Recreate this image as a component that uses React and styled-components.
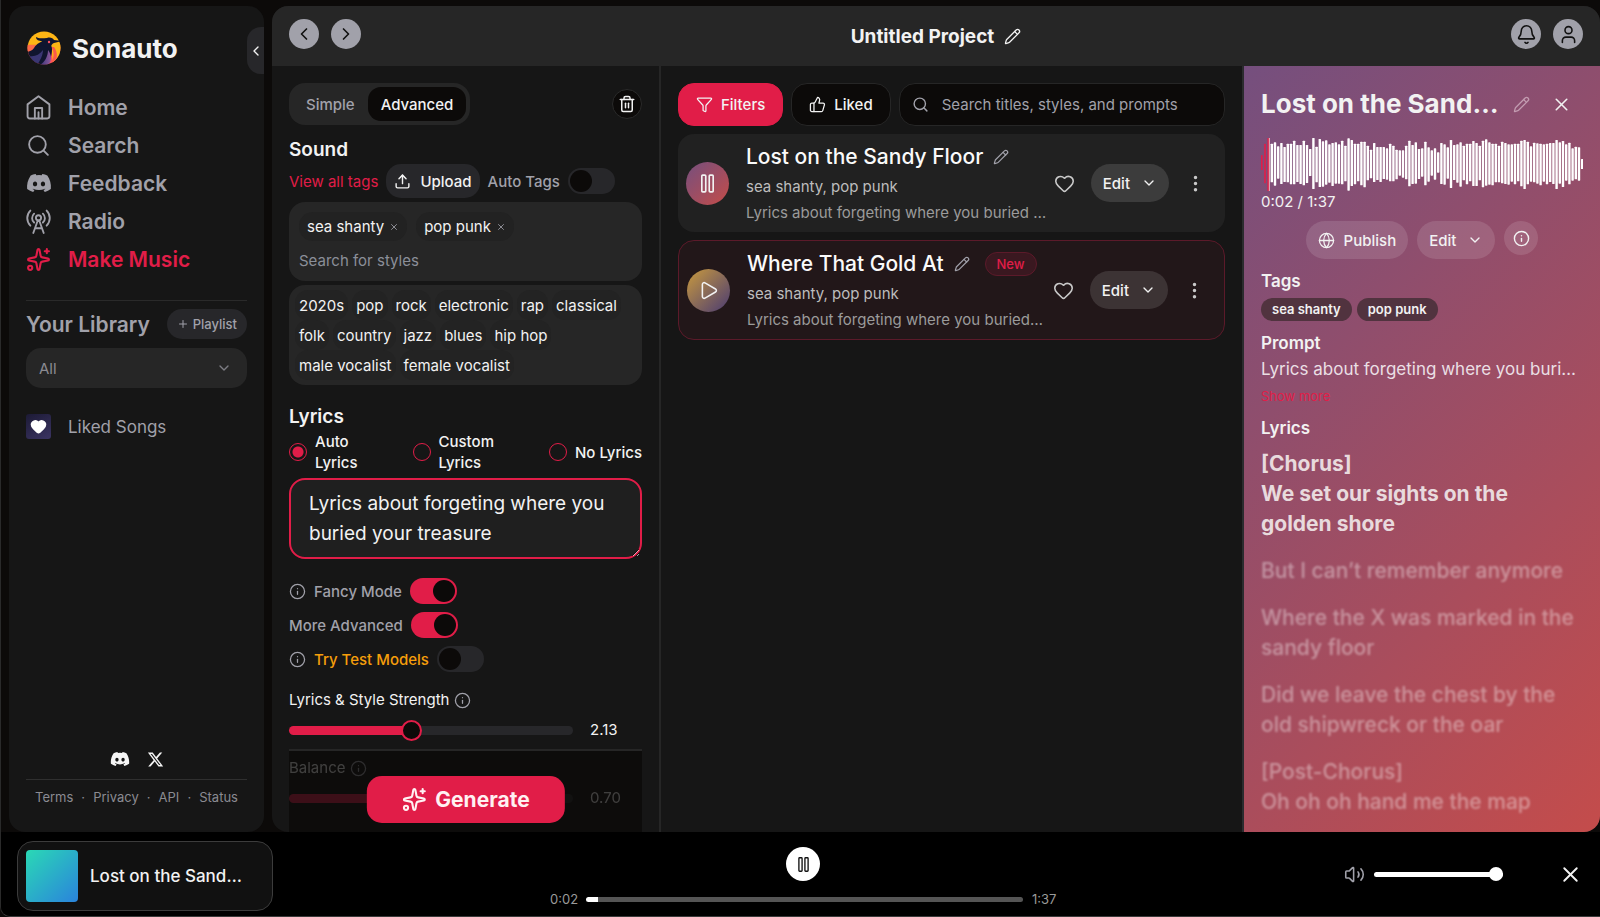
import React, { useState } from 'react';
import styled, { createGlobalStyle, css } from 'styled-components';
import {
  Bell,
  ChevronDown,
  ChevronLeft,
  ChevronRight,
  EllipsisVertical,
  Funnel,
  Globe,
  Heart,
  Info,
  Pencil,
  Play,
  Plus,
  Search,
  Sparkles,
  ThumbsUp,
  Trash2,
  Upload,
  User,
  Volume2,
  X,
} from 'lucide-react';
import { FaDiscord, FaXTwitter } from 'react-icons/fa6';

const rose = '#e11d48';
const muted = '#a1a1aa';
const surface = '#161616';
const raised = '#262626';
const ink = '#0c0a09';

const GlobalStyle = createGlobalStyle`
  * { box-sizing: border-box; }
  body {
    margin: 0;
    background: ${ink};
    color: #f2f2f2;
    color-scheme: dark;
    font-family: Inter, "Liberation Sans", sans-serif;
    font-size: 15px;
  }
  button, input, textarea, select { font: inherit; color: inherit; }
  button { border: 0; padding: 0; background: none; cursor: pointer; }
  a { color: inherit; text-decoration: none; }
  h1, h2, h3, p, ul { margin: 0; padding: 0; }
  svg { flex: none; display: block; }
`;

const Page = styled.div`
  display: flex;
  flex-direction: column;
  height: 100vh;
  border-left: 1px solid #2a2a2a;
  border-bottom: 1px solid #3a3a3a;
  border-bottom-left-radius: 10px;
  overflow: hidden;
`;

const Workspace = styled.div`
  display: flex;
  flex: 1;
  min-height: 0;
  gap: 8px;
  padding: 6px 0 0 8px;
`;

/* ---------- sidebar ---------- */

const Sidebar = styled.aside`
  position: relative;
  display: flex;
  flex-direction: column;
  flex: 0 0 255px;
  padding: 25px 17px 26px;
  border-radius: 16px;
  background: ${surface};
`;

const Brand = styled.a`
  display: flex;
  align-items: center;
  gap: 10px;
  height: 34px;
  padding-left: 1px;
  font-size: 26px;
  font-weight: 700;
`;

const CollapseButton = styled.button`
  position: absolute;
  top: 21px;
  right: 0;
  display: flex;
  align-items: center;
  justify-content: center;
  width: 17px;
  height: 47px;
  border-radius: 14px 0 0 14px;
  background: #27272a;
`;

const NavList = styled.nav`
  display: flex;
  flex-direction: column;
  margin-top: 23px;
  padding-bottom: 22px;
  border-bottom: 1px solid #2a2a2a;
`;

const NavLink = styled.a`
  display: flex;
  align-items: center;
  gap: 17px;
  height: 38px;
  font-size: 21px;
  font-weight: 600;
  color: ${({ $active }) => ($active ? rose : muted)};
`;

const IconSlot = styled.span`
  display: flex;
  justify-content: center;
  width: 25px;
`;

const LibraryHead = styled.div`
  display: flex;
  align-items: center;
  justify-content: space-between;
  margin-top: 8px;
`;

const LibraryTitle = styled.h2`
  font-size: 21px;
  font-weight: 600;
  color: ${muted};
`;

const PlaylistButton = styled.button`
  display: flex;
  align-items: center;
  gap: 4px;
  height: 30px;
  padding: 0 10px;
  border-radius: 15px;
  background: #27272a;
  color: ${muted};
  font-size: 13px;
  font-weight: 500;
`;

const SelectWrap = styled.div`
  position: relative;
  margin-top: 9px;
  color: #7d7d84;
  svg {
    position: absolute;
    right: 15px;
    top: 12px;
    pointer-events: none;
  }
`;

const LibrarySelect = styled.select`
  width: 100%;
  height: 40px;
  padding: 0 13px;
  border: 0;
  border-radius: 15px;
  appearance: none;
  background: ${raised};
  color: #8b8b92;
`;

const LikedSongs = styled.a`
  display: flex;
  align-items: center;
  gap: 17px;
  margin-top: 26px;
  font-size: 17px;
  color: ${muted};
`;

const HeartTile = styled.span`
  display: flex;
  align-items: center;
  justify-content: center;
  width: 25px;
  height: 25px;
  border-radius: 3px;
  background: linear-gradient(150deg, #1c1a35, #3b3463);
  color: #fff;
`;

const Socials = styled.div`
  display: flex;
  align-items: center;
  justify-content: center;
  gap: 17px;
  margin-top: auto;
  padding-bottom: 10px;
  border-bottom: 1px solid #2f2f2f;
  color: #f5f5f5;
`;

const FooterLinks = styled.div`
  display: flex;
  justify-content: space-between;
  padding: 8px 9px 0;
  font-size: 13px;
  line-height: 18px;
  color: #8b8b92;
`;

/* ---------- main area ---------- */

const Main = styled.main`
  display: flex;
  flex-direction: column;
  flex: 1;
  min-width: 0;
  border-radius: 16px;
  background: ${surface};
  overflow: hidden;
`;

const TopBar = styled.header`
  display: grid;
  grid-template-columns: 1fr auto 1fr;
  align-items: center;
  flex: none;
  height: 60px;
  padding: 0 17px;
  background: ${raised};
`;

const TopGroup = styled.div`
  display: flex;
  gap: 12px;
  padding-bottom: 4px;
  justify-content: ${({ $end }) => ($end ? 'flex-end' : 'flex-start')};
`;

const RoundButton = styled.button`
  display: flex;
  align-items: center;
  justify-content: center;
  width: 30px;
  height: 30px;
  border-radius: 50%;
  background: ${muted};
  color: #111;
`;

const ProjectTitle = styled.h1`
  display: flex;
  align-items: center;
  gap: 10px;
  font-size: 19px;
  font-weight: 700;
`;

const Columns = styled.div`
  display: flex;
  flex: 1;
  min-height: 0;
`;

const Composer = styled.section`
  position: relative;
  display: flex;
  flex-direction: column;
  flex: 0 0 389px;
  padding: 17px 17px 0;
  border-right: 2px solid ${raised};
  overflow: hidden;
`;

const Row = styled.div`
  display: flex;
  align-items: center;
  gap: 8px;
`;

const ComposerTop = styled(Row)`
  justify-content: space-between;
`;

const Segmented = styled.div`
  display: flex;
  padding: 4px;
  border-radius: 16px;
  background: ${raised};
`;

const Segment = styled.button`
  height: 34px;
  padding: 0 13px;
  border-radius: 13px;
  font-weight: 500;
  color: ${muted};
  ${({ $active }) => $active && css`
    background: ${ink};
    color: #f2f2f2;
  `}
`;

const TrashButton = styled(RoundButton)`
  border: 1px solid #2a2a2a;
  background: ${ink};
  color: #f2f2f2;
`;

const SectionTitle = styled.h2`
  margin-top: ${({ $gap }) => $gap}px;
  font-size: 19px;
  line-height: 28px;
  font-weight: 600;
`;

const TagsLink = styled.a`
  color: ${rose};
`;

const UploadButton = styled.button`
  display: flex;
  align-items: center;
  gap: 9px;
  height: 34px;
  padding: 0 8px;
  border-radius: 15px;
  background: #27272a;
  font-weight: 500;
`;

const FieldLabel = styled.label`
  font-weight: 500;
  color: ${({ $warn }) => ($warn ? '#f59e0b' : muted)};
`;

const Switch = styled.input.attrs({ type: 'checkbox', role: 'switch' })`
  appearance: none;
  display: flex;
  align-items: center;
  width: 47px;
  height: 26px;
  margin: 0;
  padding: 2px;
  border-radius: 13px;
  background: #27272a;
  cursor: pointer;
  &::before {
    content: '';
    width: 22px;
    height: 22px;
    border-radius: 50%;
    background: ${ink};
  }
  &:checked {
    justify-content: flex-end;
    background: ${rose};
  }
`;

const TagBox = styled.div`
  margin-top: 4px;
  padding: 10px;
  border-radius: 16px;
  background: ${raised};
`;

const PickedTags = styled.div`
  display: flex;
  gap: 9px;
`;

const PickedTag = styled.span`
  display: flex;
  align-items: center;
  gap: 5px;
  height: 29px;
  padding: 0 8px;
  border-radius: 14px;
  background: #222;
`;

const RemoveTag = styled.button`
  display: flex;
  color: ${muted};
`;

const StyleInput = styled.input`
  display: block;
  width: 100%;
  margin-top: 9px;
  padding: 0;
  border: 0;
  outline: none;
  background: none;
  line-height: 21px;
  &::placeholder { color: #8b8f99; opacity: 1; }
`;

const Suggestions = styled.div`
  display: flex;
  flex-wrap: wrap;
  column-gap: 4px;
  margin-top: 4px;
  padding: 5px 5px 5px 6px;
  border-radius: 16px;
  background: ${raised};
`;

const Suggestion = styled.button`
  height: 30px;
  padding: 0 4px;
  border-radius: 13px;
  background: #232323;
`;

const RadioGroup = styled.div`
  display: grid;
  grid-template-columns: 124fr 137fr auto;
`;

const RadioLabel = styled.label`
  display: flex;
  align-items: center;
  gap: 8px;
  font-weight: 500;
  line-height: 21px;
`;

const Radio = styled.input.attrs({ type: 'radio' })`
  appearance: none;
  flex: none;
  width: 18px;
  height: 18px;
  margin: 0;
  border: 1px solid ${rose};
  border-radius: 50%;
  &:checked {
    background: radial-gradient(circle, ${rose} 5px, transparent 6px);
  }
`;

const LyricsPrompt = styled.textarea`
  display: block;
  flex: none;
  width: 100%;
  height: 81px;
  margin-top: 5px;
  padding: 9px 18px 5px;
  border: 2px solid ${rose};
  border-radius: 16px;
  outline: none;
  background: #1f1f1f;
  font-size: 19px;
  line-height: 30px;
  overflow: hidden;
`;

const Toggles = styled.div`
  display: flex;
  flex-direction: column;
  gap: 8px;
  margin-top: 19px;
  svg { color: ${muted}; }
`;

const SliderBlock = styled.div`
  margin-top: ${({ $first }) => ($first ? '18px' : '7px')};
`;

const SliderLabel = styled.label`
  display: flex;
  align-items: center;
  gap: 5px;
  line-height: 20px;
  svg { color: ${muted}; }
`;

const SliderRow = styled.div`
  display: grid;
  grid-template-columns: 1fr 52px;
  align-items: center;
  gap: 17px;
  margin-top: 9px;
  line-height: 22px;
`;

const Slider = styled.input.attrs({ type: 'range' })`
  appearance: none;
  width: 100%;
  height: 9px;
  margin: 0;
  border-radius: 5px;
  outline: none;
  &::-webkit-slider-thumb {
    appearance: none;
    width: 21px;
    height: 21px;
    border: 2px solid ${rose};
    border-radius: 50%;
    background: ${ink};
  }
`;

const Dimmed = styled.div`
  flex: 1;
  margin-top: 8px;
  border-top: 2px solid ${raised};
  background: #0d0c0b;
  > div { opacity: 0.22; }
`;

const GenerateButton = styled.button`
  position: absolute;
  left: 50%;
  bottom: 9px;
  transform: translateX(-50%);
  display: flex;
  align-items: center;
  gap: 9px;
  height: 47px;
  padding: 0 35px;
  border-radius: 15px;
  background: ${rose};
  color: #fff1f2;
  font-size: 21px;
  font-weight: 700;
`;

/* ---------- track list ---------- */

const Tracks = styled.section`
  display: flex;
  flex-direction: column;
  flex: 1;
  min-width: 0;
  gap: 8px;
  padding: 17px;
`;

const FilterBar = styled.div`
  display: flex;
  gap: 8px;
  height: 43px;
`;

const FilterButton = styled.button`
  display: flex;
  align-items: center;
  gap: 8px;
  padding: 0 17px;
  border: 1px solid ${({ $primary }) => ($primary ? rose : raised)};
  border-radius: 16px;
  background: ${({ $primary }) => ($primary ? rose : ink)};
  font-weight: 500;
`;

const SearchBox = styled.label`
  display: flex;
  align-items: center;
  gap: 13px;
  flex: 1;
  min-width: 0;
  padding: 0 12px;
  border: 1px solid ${raised};
  border-radius: 16px;
  background: ${ink};
  color: ${muted};
`;

const SearchInput = styled.input`
  flex: 1;
  min-width: 0;
  padding: 0;
  border: 0;
  outline: none;
  background: none;
  &::placeholder { color: ${muted}; opacity: 1; }
`;

const TrackCard = styled.article`
  display: flex;
  align-items: center;
  padding: 6px 19px 6px 8px;
  border-radius: 16px;
  background: #212121;
  ${({ $fresh }) => $fresh && css`
    border: 1px solid #5c1a2a;
    background: #221719;
  `}
`;

const Cover = styled.button`
  display: flex;
  align-items: center;
  justify-content: center;
  flex: none;
  width: 43px;
  height: 43px;
  border-radius: 50%;
  background: ${({ $from, $to }) => `linear-gradient(135deg, ${$from}, ${$to})`};
`;

const TrackText = styled.div`
  flex: 1;
  min-width: 0;
  margin: 0 6px 0 17px;
`;

const TrackTitle = styled.h3`
  display: flex;
  align-items: center;
  gap: 10px;
  font-size: 21px;
  line-height: 34px;
  font-weight: 500;
  white-space: nowrap;
  color: #fafafa;
  svg { color: ${muted}; }
`;

const NewBadge = styled.span`
  margin-left: 5px;
  padding: 0 11px;
  border: 1px solid #5c1a2a;
  border-radius: 12px;
  background: #3a1820;
  color: ${rose};
  font-size: 13px;
  line-height: 22px;
`;

const TrackLine = styled.p`
  overflow: hidden;
  line-height: 26px;
  text-overflow: ellipsis;
  white-space: nowrap;
  color: ${({ $dim }) => ($dim ? '#9b9b9b' : '#bdbdbd')};
`;

const PlainIcon = styled.button`
  display: flex;
  color: ${({ $color }) => $color || '#f2f2f2'};
`;

const Pill = styled.button`
  display: flex;
  align-items: center;
  gap: 9px;
  height: 38px;
  padding: 0 12px;
  border-radius: 19px;
  background: rgba(255, 255, 255, 0.12);
  font-weight: 500;
`;

const EditPill = styled(Pill)`
  gap: 11px;
`;

const TrackActions = styled.div`
  display: flex;
  align-items: center;
  gap: 16px;
`;

/* ---------- detail panel ---------- */

const Detail = styled.section`
  flex: 0 0 358px;
  padding: 17px;
  border-left: 2px solid #2b2b2e;
  background: linear-gradient(135deg, #754f7e, #c44c4b);
  overflow: hidden;
`;

const DetailHead = styled.div`
  display: flex;
  align-items: center;
  gap: 21px;
  height: 42px;
  padding-right: 11px;
`;

const DetailTitle = styled.h2`
  flex: 1;
  min-width: 0;
  margin-right: -9px;
  overflow: hidden;
  font-size: 26px;
  line-height: 34px;
  font-weight: 700;
  text-overflow: ellipsis;
  white-space: nowrap;
`;

const WaveBox = styled.div`
  height: 54px;
  margin-top: 12px;
  svg { width: 100%; height: 54px; }
`;

const Time = styled.p`
  line-height: 22px;
`;

const DetailActions = styled.div`
  display: flex;
  align-items: flex-start;
  justify-content: center;
  gap: 9px;
  margin-top: 8px;
`;

const InfoButton = styled(Pill)`
  width: 34px;
  height: 34px;
  padding: 0;
  justify-content: center;
`;

const DetailLabel = styled.h3`
  margin-top: 9px;
  font-size: 17px;
  line-height: 26px;
  font-weight: 600;
`;

const DetailTags = styled.div`
  display: flex;
  gap: 5px;
  margin-top: 4px;
`;

const DetailTag = styled.span`
  padding: 0 11px;
  border-radius: 12px;
  background: #51333f;
  font-size: 13px;
  line-height: 23px;
  font-weight: 600;
`;

const PromptLine = styled.p`
  overflow: hidden;
  font-size: 17px;
  line-height: 26px;
  text-overflow: ellipsis;
  white-space: nowrap;
  color: #eadfe4;
`;

const ShowMore = styled.button`
  display: block;
  margin-top: 5px;
  color: ${rose};
  font-size: 13px;
  line-height: 19px;
`;

const Verse = styled.p`
  margin-top: ${({ $active }) => ($active ? '8px' : '17px')};
  font-size: 21px;
  line-height: 30px;
  font-weight: ${({ $active }) => ($active ? 700 : 500)};
  color: ${({ $active }) => ($active ? '#e8dadd' : 'rgba(255, 255, 255, 0.4)')};
  ${({ $active }) => !$active && css`filter: blur(1px);`}
`;

/* ---------- player ---------- */

const Player = styled.footer`
  display: grid;
  grid-template-columns: 1fr 506px 1fr;
  align-items: center;
  flex: none;
  height: 84px;
  padding: 0 11px 0 16px;
  background: #000;
`;

const NowPlaying = styled.div`
  display: flex;
  align-items: center;
  gap: 12px;
  width: 256px;
  height: 70px;
  margin-top: 3px;
  padding: 0 8px;
  border: 1px solid #3c3c3c;
  border-radius: 16px;
  background: #111;
`;

const Art = styled.div`
  flex: none;
  width: 52px;
  height: 52px;
  border-radius: 4px;
  background: linear-gradient(135deg, #2ad9b5, #2a83dc);
`;

const NowTitle = styled.span`
  width: 154px;
  overflow: hidden;
  font-size: 17px;
  line-height: 26px;
  font-weight: 500;
  text-overflow: ellipsis;
  white-space: nowrap;
`;

const Transport = styled.div`
  display: flex;
  flex-direction: column;
  align-items: center;
  gap: 8px;
  padding-top: 8px;
`;

const PauseButton = styled(RoundButton)`
  width: 34px;
  height: 34px;
  background: #fff;
`;

const ProgressRow = styled.div`
  display: grid;
  grid-template-columns: 27px 1fr 24px;
  align-items: center;
  gap: 9px;
  width: 100%;
  color: #9a9a9a;
  font-size: 13px;
  line-height: 20px;
`;

const Seek = styled(Slider)`
  height: 5px;
  &::-webkit-slider-thumb { width: 0; height: 0; border: 0; }
`;

const Volume = styled(Slider)`
  width: 129px;
  height: 5px;
  background: #fff;
  &::-webkit-slider-thumb {
    width: 14px;
    height: 14px;
    border: 0;
    background: #fff;
  }
`;

const PlayerEnd = styled.div`
  display: flex;
  align-items: center;
  justify-content: flex-end;
  gap: 9px;
  padding-right: 6px;
  color: ${muted};
  button { margin-left: 46px; }
`;

const Logo = () => (
  <svg width="35" height="34" viewBox="0 0 35 34">
    <defs>
      <linearGradient id="sky" x1="0" y1="0" x2="0" y2="1">
        <stop offset="0.38" stopColor="#fdb515" />
        <stop offset="0.42" stopColor="#fb8a24" />
        <stop offset="0.6" stopColor="#ff4f5e" />
      </linearGradient>
      <linearGradient id="plume" x1="0" y1="0" x2="1" y2="0">
        <stop offset="0" stopColor="#3c3679" />
        <stop offset="1" stopColor="#8a5a9c" />
      </linearGradient>
      <clipPath id="disc"><circle cx="17" cy="17" r="16.5" /></clipPath>
    </defs>
    <g clipPath="url(#disc)">
      <rect width="35" height="34" fill="url(#sky)" />
      <path d="M0 14h14v8H0z" fill="#fd6a4a" />
      <path d="M24 14 34 11v18l-8 5z" fill="#fdb515" />
      <path d="M24 16c4 5 3 12-1 18h3c5-5 5-13 1-18z" fill="#fb5a4c" />
      <path d="M0 21c3-1 5-1 7-4 3-5 7-6 10-7 5 1 8 4 8 8 0 6-2 12-6 16H5z" fill="#10152f" />
      <path d="M2 25c6 1 10-1 14-6 0 5-3 11-6 15H5z" fill="#3a3673" />
      <path d="M13 34c5-3 8-9 8-15 4 5 4 11 0 15z" fill="url(#plume)" />
    </g>
    <path d="M9 6c3 2 7 1 11 1 3-1 6 0 7 2l8 1-8 2c-3 1-4 5-3 9-4-6-9-8-14-5 2-2 4-4 5-6-3 0-6-1-6-4z" fill="#10152f" />
    <circle cx="22" cy="11" r="1.2" fill="#ff4f5e" />
  </svg>
);

const HomeIcon = () => (
  <svg width="25" height="25" viewBox="0 0 24 24" fill="none" stroke="currentColor" strokeWidth="1.8" strokeLinecap="round" strokeLinejoin="round">
    <path d="M1.5 9 12 1.2 22.5 9v11.5a2 2 0 0 1-2 2h-17a2 2 0 0 1-2-2z" />
    <path d="M8.5 22.5v-10h7v10M12 16.5v6" />
  </svg>
);

const RadioIcon = () => (
  <svg width="25" height="25" viewBox="0 0 24 24" fill="none" stroke="currentColor" strokeWidth="1.8" strokeLinecap="round" strokeLinejoin="round">
    <path d="M4.2 1.5c-4 4-4 10.5 0 14.5M19.8 1.5c4 4 4 10.5 0 14.5" />
    <path d="M7.8 4.5c-2.6 2.6-2.6 6 0 8.5M16.2 4.5c2.6 2.6 2.6 6 0 8.5" />
    <circle cx="12" cy="8.5" r="2.5" />
    <path d="m11.3 11-4.3 12M12.7 11 17 23M8.8 18.5h6.4" />
  </svg>
);

const PauseIcon = ({ size = 21 }) => (
  <svg width={size} height={size} viewBox="0 0 24 24" fill="none" stroke="currentColor" strokeWidth="1.9">
    <rect x="5.5" y="2.5" width="4.5" height="19" rx="1" />
    <rect x="14" y="2.5" width="4.5" height="19" rx="1" />
  </svg>
);

const levels = [
  27, 61, 78, 61, 65, 53, 63, 51, 61, 61, 70, 57, 57, 70, 57, 45, 78, 52, 75, 68, 71, 59, 63, 65, 59,
  70, 55, 77, 72, 61, 61, 67, 67, 55, 43, 63, 51, 51, 51, 47, 61, 55, 43, 41, 41, 55, 70, 57, 65, 45,
  47, 67, 50, 41, 47, 35, 63, 59, 50, 72, 57, 59, 65, 55, 61, 61, 69, 63, 55, 70, 74, 65, 61, 61, 55,
  67, 63, 59, 59, 61, 61, 70, 72, 67, 53, 64, 62, 61, 59, 61, 63, 63, 72, 65, 69, 59, 64, 47, 52, 50, 15,
];

const Waveform = () => (
  <svg viewBox="0 0 322 54" preserveAspectRatio="none" role="img" aria-label="Waveform">
    {levels.map((level, i) => {
      const top = level / 3;
      const bottom = Math.max(top + ((i * 7) % 5) - 3, 5);
      return (
        <rect
          key={i}
          x={i * 3.2}
          y={27 - top}
          width={i < 3 ? 1.6 : 2.4}
          height={top + bottom}
          rx="0.6"
          fill={i < 3 ? rose : '#fff'}
        />
      );
    })}
    <rect x="7.8" y="1" width="1.2" height="53" fill="#d9a6b5" />
  </svg>
);

const navItems = [
  { name: 'Home', icon: <HomeIcon /> },
  { name: 'Search', icon: <Search size={25} strokeWidth={1.8} /> },
  { name: 'Feedback', icon: <FaDiscord size={26} /> },
  { name: 'Radio', icon: <RadioIcon /> },
  { name: 'Make Music', icon: <Sparkles size={25} />, active: true },
];

const footerLinks = ['Terms', 'Privacy', 'API', 'Status'];

const suggestions = [
  '2020s', 'pop', 'rock', 'electronic', 'rap', 'classical', 'folk', 'country',
  'jazz', 'blues', 'hip hop', 'male vocalist', 'female vocalist',
];

const tracks = [
  { title: 'Lost on the Sandy Floor', from: '#754f7e', to: '#c44c49', playing: true },
  { title: 'Where That Gold At', from: '#c99a3e', to: '#4a3b72', fresh: true },
];

const verses = [
  ['But I can’t remember anymore'],
  ['Where the X was marked in the sandy floor'],
  ['Did we leave the chest by the old shipwreck or the oar'],
  ['[Post-Chorus]', 'Oh oh oh hand me the map'],
];

const SliderField = ({ id, label, value, onChange, min, max, first }) => {
  const percent = ((value - min) / (max - min)) * 100;
  return (
    <SliderBlock $first={first}>
      <SliderLabel htmlFor={id}>{label} <Info size={17} strokeWidth={1.8} /></SliderLabel>
      <SliderRow>
        <Slider
          id={id}
          min={min}
          max={max}
          step="0.01"
          value={value}
          onChange={(e) => onChange(Number(e.target.value))}
          style={{ background: `linear-gradient(to right, ${rose} ${percent}%, #27272a ${percent}%)` }}
        />
        <span>{value.toFixed(2)}</span>
      </SliderRow>
    </SliderBlock>
  );
};

function SidebarPanel() {
  return (
    <Sidebar>
      <Brand href="#"><Logo /> Sonauto</Brand>
      <CollapseButton aria-label="Collapse sidebar"><ChevronLeft size={16} /></CollapseButton>
      <NavList>
        {navItems.map((item) => (
          <NavLink key={item.name} href="#" $active={item.active}>
            <IconSlot>{item.icon}</IconSlot>
            {item.name}
          </NavLink>
        ))}
      </NavList>
      <LibraryHead>
        <LibraryTitle>Your Library</LibraryTitle>
        <PlaylistButton><Plus size={12} />Playlist</PlaylistButton>
      </LibraryHead>
      <SelectWrap>
        <LibrarySelect aria-label="Library filter">
          <option>All</option>
        </LibrarySelect>
        <ChevronDown size={16} />
      </SelectWrap>
      <LikedSongs href="#">
        <HeartTile><Heart size={17} fill="currentColor" /></HeartTile>
        Liked Songs
      </LikedSongs>
      <Socials>
        <a href="#" aria-label="Discord"><FaDiscord size={20} /></a>
        <a href="#" aria-label="X"><FaXTwitter size={17} /></a>
      </Socials>
      <FooterLinks>
        {footerLinks.map((name, i) => (
          <React.Fragment key={name}>
            {i > 0 && <span>·</span>}
            <a href="#">{name}</a>
          </React.Fragment>
        ))}
      </FooterLinks>
    </Sidebar>
  );
}

function ComposerPanel() {
  const [mode, setMode] = useState('Advanced');
  const [lyricsMode, setLyricsMode] = useState('auto');
  const [picked, setPicked] = useState(['sea shanty', 'pop punk']);
  const [strength, setStrength] = useState(2.13);
  const [balance, setBalance] = useState(0.7);

  const radio = (value) => ({
    name: 'lyrics-mode',
    checked: lyricsMode === value,
    onChange: () => setLyricsMode(value),
  });

  return (
    <Composer>
      <ComposerTop>
        <Segmented>
          {['Simple', 'Advanced'].map((name) => (
            <Segment key={name} $active={mode === name} onClick={() => setMode(name)}>{name}</Segment>
          ))}
        </Segmented>
        <TrashButton aria-label="Clear"><Trash2 size={18} /></TrashButton>
      </ComposerTop>
      <SectionTitle $gap={11}>Sound</SectionTitle>
      <Row>
        <TagsLink href="#">View all tags</TagsLink>
        <UploadButton><Upload size={17} />Upload</UploadButton>
        <FieldLabel htmlFor="auto-tags">Auto Tags</FieldLabel>
        <Switch id="auto-tags" />
      </Row>
      <TagBox>
        <PickedTags>
          {picked.map((tag) => (
            <PickedTag key={tag}>
              {tag}
              <RemoveTag aria-label={`Remove ${tag}`} onClick={() => setPicked(picked.filter((t) => t !== tag))}>
                <X size={10} />
              </RemoveTag>
            </PickedTag>
          ))}
        </PickedTags>
        <StyleInput aria-label="Search for styles" placeholder="Search for styles" />
      </TagBox>
      <Suggestions>
        {suggestions.map((name) => (
          <Suggestion key={name} onClick={() => setPicked([...new Set([...picked, name])])}>{name}</Suggestion>
        ))}
      </Suggestions>
      <SectionTitle $gap={18}>Lyrics</SectionTitle>
      <RadioGroup>
        <RadioLabel><Radio {...radio('auto')} /><span>Auto<br />Lyrics</span></RadioLabel>
        <RadioLabel><Radio {...radio('custom')} /><span>Custom<br />Lyrics</span></RadioLabel>
        <RadioLabel><Radio {...radio('none')} /><span>No Lyrics</span></RadioLabel>
      </RadioGroup>
      <LyricsPrompt aria-label="Lyrics prompt" defaultValue="Lyrics about forgeting where you buried your treasure" />
      <Toggles>
        <Row>
          <Info size={17} strokeWidth={1.8} />
          <FieldLabel htmlFor="fancy">Fancy Mode</FieldLabel>
          <Switch id="fancy" defaultChecked />
        </Row>
        <Row>
          <FieldLabel htmlFor="more">More Advanced</FieldLabel>
          <Switch id="more" defaultChecked />
        </Row>
        <Row>
          <Info size={17} strokeWidth={1.8} />
          <FieldLabel htmlFor="test" $warn>Try Test Models</FieldLabel>
          <Switch id="test" />
        </Row>
      </Toggles>
      <SliderField id="strength" label="Lyrics & Style Strength" min={0} max={5} value={strength} onChange={setStrength} first />
      <Dimmed>
        <SliderField id="balance" label="Balance" min={0} max={1} value={balance} onChange={setBalance} />
      </Dimmed>
      <GenerateButton><Sparkles size={25} />Generate</GenerateButton>
    </Composer>
  );
}

function TrackList() {
  return (
    <Tracks>
      <FilterBar>
        <FilterButton $primary><Funnel size={17} strokeWidth={1.8} />Filters</FilterButton>
        <FilterButton><ThumbsUp size={17} strokeWidth={1.8} />Liked</FilterButton>
        <SearchBox>
          <Search size={17} />
          <SearchInput aria-label="Search tracks" placeholder="Search titles, styles, and prompts" />
        </SearchBox>
      </FilterBar>
      {tracks.map((track) => (
        <TrackCard key={track.title} $fresh={track.fresh}>
          <Cover $from={track.from} $to={track.to} aria-label={track.playing ? 'Pause' : 'Play'}>
            {track.playing ? <PauseIcon /> : <Play size={21} strokeWidth={1.8} />}
          </Cover>
          <TrackText>
            <TrackTitle>
              {track.title}
              <Pencil size={16} strokeWidth={1.8} />
              {track.fresh && <NewBadge>New</NewBadge>}
            </TrackTitle>
            <TrackLine>sea shanty, pop punk</TrackLine>
            <TrackLine $dim>Lyrics about forgeting where you buried your treasure</TrackLine>
          </TrackText>
          <TrackActions>
            <PlainIcon aria-label="Like" $color="#c9c9c9"><Heart size={21} strokeWidth={1.8} /></PlainIcon>
            <EditPill>Edit <ChevronDown size={16} /></EditPill>
            <PlainIcon aria-label="More" $color="#c9c9c9"><EllipsisVertical size={21} /></PlainIcon>
          </TrackActions>
        </TrackCard>
      ))}
    </Tracks>
  );
}

function DetailPanel() {
  return (
    <Detail>
      <DetailHead>
        <DetailTitle>Lost on the Sandy Floor</DetailTitle>
        <PlainIcon aria-label="Rename" $color="#c29bb0"><Pencil size={17} strokeWidth={1.8} /></PlainIcon>
        <PlainIcon aria-label="Close details"><X size={21} strokeWidth={1.8} /></PlainIcon>
      </DetailHead>
      <WaveBox><Waveform /></WaveBox>
      <Time>0:02 / 1:37</Time>
      <DetailActions>
        <Pill><Globe size={17} strokeWidth={1.8} />Publish</Pill>
        <EditPill>Edit <ChevronDown size={16} /></EditPill>
        <InfoButton aria-label="Info"><Info size={17} /></InfoButton>
      </DetailActions>
      <DetailLabel>Tags</DetailLabel>
      <DetailTags>
        <DetailTag>sea shanty</DetailTag>
        <DetailTag>pop punk</DetailTag>
      </DetailTags>
      <DetailLabel>Prompt</DetailLabel>
      <PromptLine>Lyrics about forgeting where you buried your treasure</PromptLine>
      <ShowMore>Show more</ShowMore>
      <DetailLabel>Lyrics</DetailLabel>
      <Verse $active>[Chorus]<br />We set our sights on the golden shore</Verse>
      {verses.map((lines) => (
        <Verse key={lines[0]}>
          {lines.map((line, i) => (
            <React.Fragment key={line}>{i > 0 && <br />}{line}</React.Fragment>
          ))}
        </Verse>
      ))}
    </Detail>
  );
}

function PlayerBar() {
  const [position, setPosition] = useState(7);
  const [volume, setVolume] = useState(100);
  const percent = position / 2.6;

  return (
    <Player>
      <NowPlaying>
        <Art />
        <NowTitle>Lost on the Sandy Floor</NowTitle>
      </NowPlaying>
      <Transport>
        <PauseButton aria-label="Pause"><PauseIcon size={17} /></PauseButton>
        <ProgressRow>
          <span>0:02</span>
          <Seek
            aria-label="Seek"
            max={260}
            value={position}
            onChange={(e) => setPosition(Number(e.target.value))}
            style={{ background: `linear-gradient(to right, #fff ${percent}%, #555 ${percent}%)` }}
          />
          <span>1:37</span>
        </ProgressRow>
      </Transport>
      <PlayerEnd>
        <Volume2 size={21} strokeWidth={1.8} />
        <Volume aria-label="Volume" value={volume} onChange={(e) => setVolume(Number(e.target.value))} />
        <PlainIcon aria-label="Close player"><X size={25} strokeWidth={1.8} /></PlainIcon>
      </PlayerEnd>
    </Player>
  );
}

function App() {
  return (
    <Page>
      <GlobalStyle />
      <Workspace>
        <SidebarPanel />
        <Main>
          <TopBar>
            <TopGroup>
              <RoundButton aria-label="Back"><ChevronLeft size={20} /></RoundButton>
              <RoundButton aria-label="Forward"><ChevronRight size={20} /></RoundButton>
            </TopGroup>
            <ProjectTitle>Untitled Project <Pencil size={17} strokeWidth={1.8} /></ProjectTitle>
            <TopGroup $end>
              <RoundButton aria-label="Notifications"><Bell size={21} strokeWidth={1.8} /></RoundButton>
              <RoundButton aria-label="Account"><User size={21} strokeWidth={1.8} /></RoundButton>
            </TopGroup>
          </TopBar>
          <Columns>
            <ComposerPanel />
            <TrackList />
            <DetailPanel />
          </Columns>
        </Main>
      </Workspace>
      <PlayerBar />
    </Page>
  );
}

export default App;
